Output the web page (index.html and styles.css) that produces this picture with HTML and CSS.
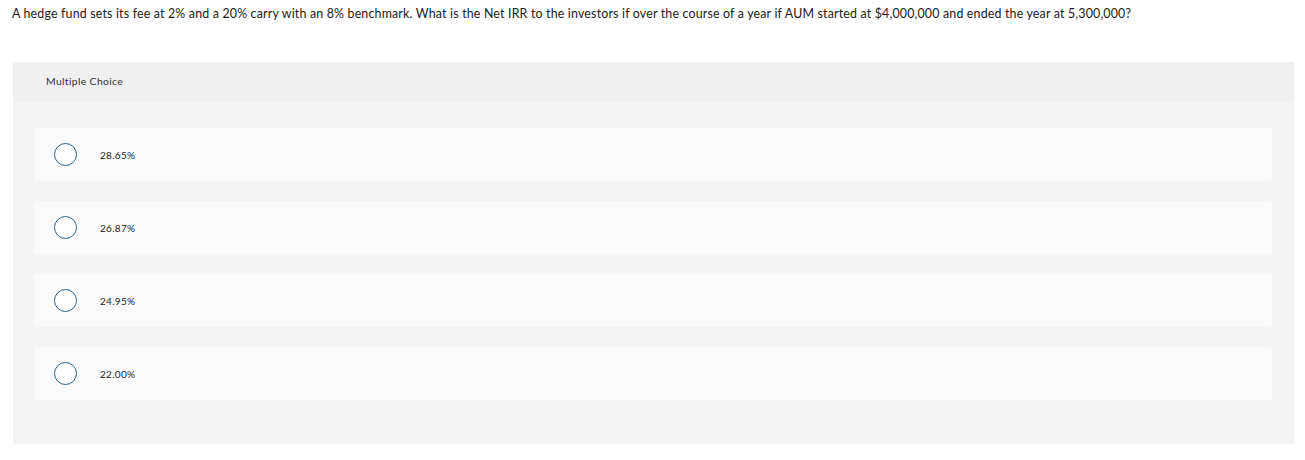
FILE: index.html
```html
<!DOCTYPE html>
<html>
<head>
<meta charset="utf-8">
<link rel="stylesheet" href="styles.css">
</head>
<body>
<p class="question">A hedge fund sets its fee at 2% and a 20% carry with an 8% benchmark. What is the Net IRR to the investors if over the course of a year if AUM started at $4,000,000 and ended the year at 5,300,000?</p>
<section class="panel">
  <div class="panel-head">Multiple Choice</div>
  <div class="options">
    <label class="option"><span class="radio"></span><span class="label">28.65%</span></label>
    <label class="option"><span class="radio"></span><span class="label">26.87%</span></label>
    <label class="option"><span class="radio"></span><span class="label">24.95%</span></label>
    <label class="option"><span class="radio"></span><span class="label">22.00%</span></label>
  </div>
</section>
</body>
</html>
```
FILE: styles.css
```css
* { box-sizing: border-box; }
body {
  margin: 0;
  padding: 6px 11px 0 13px;
  background: #fff;
  font-family: Lato, "Open Sans", sans-serif;
  color: #222;
}
.question {
  margin: 0 0 0 -1px;
  font-size: 12.4px;
  line-height: 16px;
  letter-spacing: 0.18px;
  color: #1a1a1a;
}
.panel {
  margin-top: 40px;
  background: #f4f4f4;
  padding-bottom: 44px;
}
.panel-head {
  background: #f0f0f0;
  height: 40px;
  display: flex;
  align-items: center;
  padding-left: 33px;
  padding-bottom: 2px;
  font-size: 10.4px;
  letter-spacing: 0.35px;
  color: #333;
}
.options {
  display: flex;
  flex-direction: column;
  gap: 20px;
  padding: 26px 22px 0 21px;
}
.option {
  display: flex;
  align-items: center;
  height: 53px;
  background: #fafafa;
  border-radius: 3px;
  padding-left: 20px;
}
.radio {
  width: 23px;
  height: 23px;
  border: 1.5px solid #2b5f8c;
  border-radius: 50%;
  background: #fff;
  flex: none;
}
.label {
  margin-left: 23px;
  font-size: 10px;
  letter-spacing: 0.3px;
  color: #222;
}
```
